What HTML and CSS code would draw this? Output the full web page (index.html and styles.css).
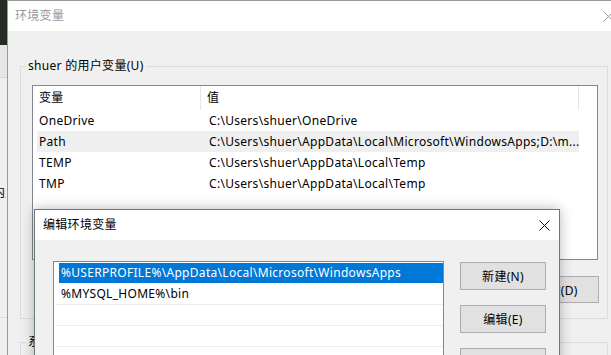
FILE: index.html
```html
<!DOCTYPE html>
<html lang="zh-CN">
<head>
  <meta charset="UTF-8" />
  <title>环境变量</title>
  <link rel="stylesheet" href="styles.css">
</head>
<body>

  <div class="desktop">
    <div class="back-window">
      <div class="back-head"></div>
      <div class="back-row"><span class="back-text">内</span></div>
      <div class="back-row"></div>
    </div>
  </div>

  <div class="window env-window">
    <div class="titlebar inactive">
      <span class="title">环境变量</span>
      <span class="close">
        <svg width="11" height="11" viewBox="0 0 11 11"><path d="M0.5 0.5L10.5 10.5M10.5 0.5L0.5 10.5" stroke="#9a9a9a" stroke-width="1"/></svg>
      </span>
    </div>
    <div class="win-body">
      <fieldset class="group">
        <legend>shuer 的用户变量(U)</legend>
        <div class="group-inner">
          <div class="listview">
            <div class="lv-head">
              <div class="lv-col name-col">变量</div>
              <div class="lv-col value-col">值</div>
            </div>
            <div class="lv-row"><span>OneDrive</span><span>C:\Users\shuer\OneDrive</span></div>
            <div class="lv-row selected"><span>Path</span><span>C:\Users\shuer\AppData\Local\Microsoft\WindowsApps;D:\m...</span></div>
            <div class="lv-row"><span>TEMP</span><span>C:\Users\shuer\AppData\Local\Temp</span></div>
            <div class="lv-row"><span>TMP</span><span>C:\Users\shuer\AppData\Local\Temp</span></div>
          </div>
          <div class="btn-row">
            <button class="btn">新建(N)...</button>
            <button class="btn">编辑(E)...</button>
            <button class="btn">删除(D)</button>
          </div>
        </div>
      </fieldset>
      <fieldset class="group second">
        <legend>系统变量(S)</legend>
        <div class="group-inner"></div>
      </fieldset>
    </div>
  </div>

  <div class="window edit-window">
    <div class="titlebar">
      <span class="title">编辑环境变量</span>
      <span class="close">
        <svg width="11" height="11" viewBox="0 0 11 11"><path d="M0.5 0.5L10.5 10.5M10.5 0.5L0.5 10.5" stroke="#111" stroke-width="1"/></svg>
      </span>
    </div>
    <div class="edit-body">
      <div class="pathlist">
        <div class="pl-row selected"><span>%USERPROFILE%\AppData\Local\Microsoft\WindowsApps</span></div>
        <div class="pl-row"><span>%MYSQL_HOME%\bin</span></div>
        <div class="pl-row"></div>
        <div class="pl-row"></div>
        <div class="pl-row"></div>
      </div>
      <div class="side-buttons">
        <button class="btn big">新建(N)</button>
        <button class="btn big">编辑(E)</button>
        <button class="btn big"></button>
      </div>
    </div>
  </div>

</body>
</html>
```

FILE: styles.css
```css
* {
  box-sizing: border-box;
}

body {
  margin: 0;
  width: 611px;
  height: 355px;
  overflow: hidden;
  position: relative;
  background: #f0f0f0;
  font-family: "Noto Sans", "Noto Sans CJK SC", sans-serif;
  font-size: 12px;
  line-height: 16px;
  letter-spacing: 0.3px;
  color: #000;
}

/* what is behind the windows, on the left */
.desktop {
  position: absolute;
  left: 0;
  top: 0;
  width: 8px;
  height: 355px;
  background: #262b26;
}

.back-window {
  margin-top: 45px;
  height: 310px;
  background: #f0f0f0;
  border-right: 1px solid #e2e2e2;
}

.back-head {
  height: 33px;
  background: #e6e6e6;
  border-bottom: 1px solid #d6d6d6;
}

.back-row {
  height: 120px;
  padding-top: 107px;
  border-bottom: 1px solid #dcdcdc;
}

.back-text {
  display: block;
  margin-left: -7px;
}

.window {
  position: absolute;
  background: #f0f0f0;
}

.env-window {
  left: 7px;
  top: 0;
  width: 640px;
  height: 380px;
  border: 1px solid #9a9a9a;
}

.edit-window {
  left: 34px;
  top: 209px;
  width: 526px;
  height: 200px;
  border: 1px solid #6b7a70;
  box-shadow: 0 0 12px rgba(0, 0, 0, 0.28);
}

.titlebar {
  height: 30px;
  background: #fff;
  display: flex;
  align-items: center;
  justify-content: space-between;
  padding-left: 8px;
}

.titlebar.inactive .title {
  color: #999;
}

.env-window .titlebar {
  padding-left: 7px;
  padding-right: 32px;
}

.edit-window .titlebar {
  padding-right: 9px;
}

.close {
  display: flex;
  width: 11px;
  height: 11px;
}

/* main window */
.win-body {
  padding: 27px 0 0 12px;
}

.group {
  margin: 0;
  padding: 0;
  width: 588px;
  min-width: 0;
  border: 1px solid #dcdcdc;
}

.group legend {
  margin-left: 5px;
  padding: 0 2px;
  line-height: 16px;
}

.group-inner {
  padding: 11px 8px 15px 11px;
}

.group.second {
  margin-top: 15px;
}

.listview {
  width: 566px;
  height: 175px;
  background: #fff;
  border: 1px solid #828790;
}

.lv-head {
  display: flex;
  height: 24px;
}

.lv-col {
  display: flex;
  align-items: center;
  padding-left: 6px;
  border-right: 1px solid #e5e5e5;
}

.name-col {
  width: 168px;
}

.value-col {
  width: 378px;
}

.lv-row {
  display: grid;
  grid-template-columns: 170px 1fr;
  margin-left: 4px;
  width: 542px;
  height: 21px;
  align-items: center;
  padding-left: 2px;
  white-space: nowrap;
}

.lv-row.selected {
  background: #efefef;
}

.btn-row {
  display: flex;
  justify-content: flex-end;
  gap: 10px;
  margin-top: 16px;
}

.btn {
  font-family: inherit;
  font-size: 12px;
  letter-spacing: 0.3px;
  color: #000;
  width: 84px;
  height: 27px;
  padding: 0;
  background: #e1e1e1;
  border: 1px solid #adadad;
}

/* edit dialog */
.edit-body {
  display: flex;
  align-items: flex-start;
  padding: 21px 0 0 18px;
}

.pathlist {
  width: 391px;
  height: 140px;
  background: #fff;
  border: 1px solid #828790;
  padding-top: 1px;
}

.pl-row {
  height: 21px;
  margin-left: 1px;
  border-bottom: 1px solid #ececec;
  white-space: nowrap;
}

.pl-row span {
  display: block;
  height: 20px;
  line-height: 20px;
  margin-left: 4px;
  padding-left: 2px;
}

.pl-row.selected {
  border-bottom-color: #fff;
}

.pl-row.selected span {
  background: #0078d7;
  color: #fff;
}

.side-buttons {
  display: flex;
  flex-direction: column;
  gap: 15px;
  margin-left: 16px;
  padding-top: 1px;
}

.btn.big {
  width: 86px;
  height: 28px;
}
```
